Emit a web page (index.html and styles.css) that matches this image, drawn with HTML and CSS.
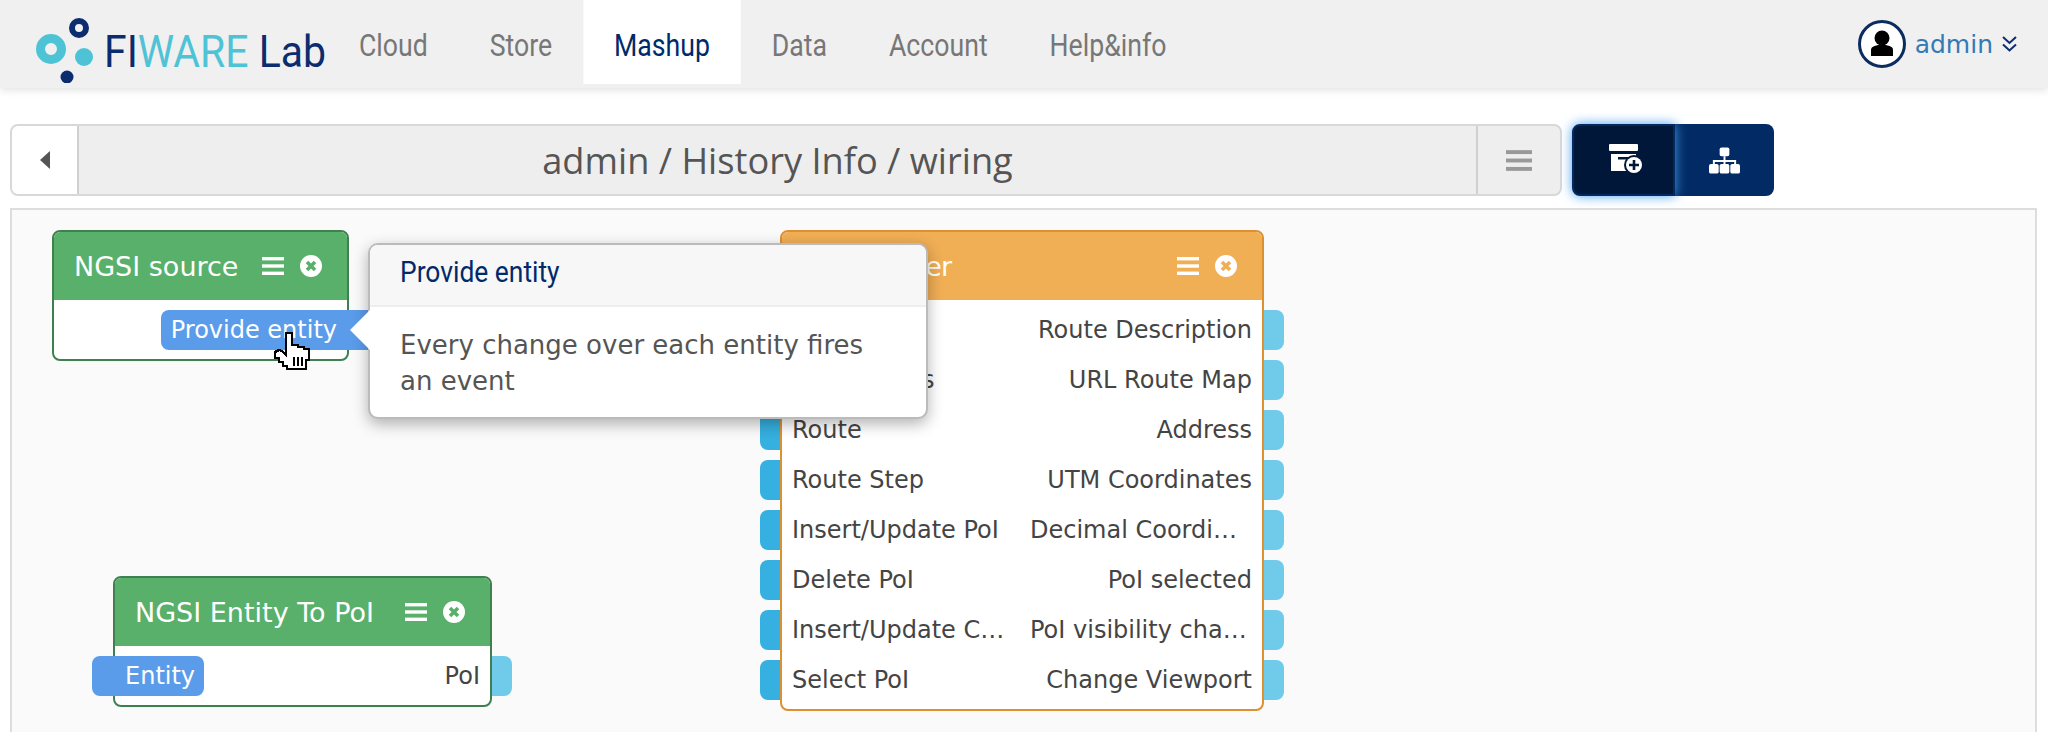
FILE: index.html
```html
<!DOCTYPE html>
<html lang="en">
<head>
  <meta charset="UTF-8" />
  <title>FIWARE Lab - Wiring</title>
  <link rel="stylesheet" href="styles.css">
</head>
<body>

  <svg class="defs" width="0" height="0">
    <symbol id="i-bars" viewBox="0 0 22 20" preserveAspectRatio="none">
      <rect x="0" y="1" width="22" height="3.4" />
      <rect x="0" y="8.3" width="22" height="3.4" />
      <rect x="0" y="15.6" width="22" height="3.4" />
    </symbol>
    <symbol id="i-close" viewBox="0 0 22 22">
      <circle cx="11" cy="11" r="11" fill="#fff" />
      <path d="M7 7l8 8M15 7l-8 8" stroke="currentColor" stroke-width="3.6" fill="none" />
    </symbol>
  </svg>

  <div id="topbar">
    <div id="logo">
      <svg class="logo-mark" width="72" height="70" viewBox="0 0 72 70">
        <circle cx="19" cy="36" r="10.5" fill="none" stroke="#4fc3d6" stroke-width="9" />
        <circle cx="52" cy="44" r="9" fill="#4fc3d6" />
        <circle cx="47" cy="15" r="7" fill="none" stroke="#0b2c6e" stroke-width="6" />
        <circle cx="35" cy="64" r="6.5" fill="#0b2c6e" />
      </svg>
      <span class="logo-text"><b>FI</b><i>WARE</i> <b>Lab</b></span>
    </div>
    <div id="nav">
      <a class="tab" href="#">Cloud</a>
      <a class="tab" href="#">Store</a>
      <a class="tab active" href="#">Mashup</a>
      <a class="tab" href="#">Data</a>
      <a class="tab" href="#">Account</a>
      <a class="tab" href="#">Help&amp;info</a>
    </div>
    <div id="user">
      <svg width="48" height="48" viewBox="0 0 48 48">
        <circle cx="24" cy="24" r="22.5" fill="#fff" stroke="#0b2c5e" stroke-width="3" />
        <circle cx="24" cy="18" r="7.5" fill="#000" />
        <path d="M13 36v-6c0-3 3-4 7-5h8c4 1 7 2 7 5v6z" fill="#000" />
      </svg>
      <span class="user-name">admin</span>
      <svg width="15" height="16" viewBox="0 0 15 16">
        <path d="M1 1l6.5 6 6.5-6M1 8.500l6.500 6 6.500-6" fill="none" stroke="#0b2c6e" stroke-width="2" />
      </svg>
    </div>
  </div>

  <div id="toolbar">
    <div class="path-bar">
      <div class="back">
        <svg width="10" height="18" viewBox="0 0 10 18"><path d="M10 0v18L0 9z" fill="#555" /></svg>
      </div>
      <div class="path-title">admin / History Info / wiring</div>
      <div class="path-menu">
        <svg class="bars-grey" width="26" height="23"><use href="#i-bars" /></svg>
      </div>
    </div>
    <div class="btn-group">
      <div class="blue-btn on">
        <svg width="38" height="32" viewBox="0 0 38 32">
          <rect x="4" y="0" width="29" height="7" rx="1" fill="#fff" />
          <rect x="6" y="10" width="25" height="17" fill="#fff" />
          <rect x="13" y="13" width="11" height="2.500" fill="#00173a" />
          <circle cx="29" cy="21" r="10" fill="#00173a" />
          <circle cx="29" cy="21" r="8" fill="#fff" />
          <path d="M29 16v10M24 21h10" stroke="#00173a" stroke-width="2.600" />
        </svg>
      </div>
      <div class="blue-btn">
        <svg width="31" height="27" viewBox="0 0 32 27" fill="#fff">
          <rect x="11" y="0" width="10" height="9" rx="2" />
          <path d="M15 9h2v4h11v6h-2v-4H17v4h-2v-4H6v4H4v-6h11z" />
          <rect x="0" y="17" width="10" height="10" rx="2" />
          <rect x="11" y="17" width="10" height="10" rx="2" />
          <rect x="22" y="17" width="10" height="10" rx="2" />
        </svg>
      </div>
    </div>
  </div>

  <div id="canvas">

    <div class="node green node-source">
      <div class="node-head">
        <span class="node-title">NGSI source</span>
        <svg class="ico-bars" width="22" height="20"><use href="#i-bars" /></svg>
        <svg class="ico-close" width="22" height="22"><use href="#i-close" /></svg>
      </div>
      <div class="node-body">
        <div class="ep-row end">
          <span class="pill pill-out">Provide entity</span>
        </div>
      </div>
    </div>

    <div class="node green node-topoi">
      <div class="node-head">
        <span class="node-title">NGSI Entity To PoI</span>
        <svg class="ico-bars" width="22" height="20"><use href="#i-bars" /></svg>
        <svg class="ico-close" width="22" height="22"><use href="#i-close" /></svg>
      </div>
      <div class="node-body">
        <div class="ep-row">
          <span class="pill pill-in">Entity</span>
          <div class="ep out"><span class="label">PoI</span></div>
        </div>
      </div>
    </div>

    <div class="node orange node-map">
      <div class="node-head">
        <span class="node-title">Map Viewer</span>
        <svg class="ico-bars" width="22" height="20"><use href="#i-bars" /></svg>
        <svg class="ico-close" width="22" height="22"><use href="#i-close" /></svg>
      </div>
      <div class="node-body">
        <div class="ep-row"><div class="ep in"><span class="label">Layer Info</span></div><div class="ep out"><span class="label">Route Description</span></div></div>
        <div class="ep-row"><div class="ep in"><span class="label">Set Address</span></div><div class="ep out"><span class="label">URL Route Map</span></div></div>
        <div class="ep-row"><div class="ep in"><span class="label">Route</span></div><div class="ep out"><span class="label">Address</span></div></div>
        <div class="ep-row"><div class="ep in"><span class="label">Route Step</span></div><div class="ep out"><span class="label">UTM Coordinates</span></div></div>
        <div class="ep-row"><div class="ep in"><span class="label">Insert/Update PoI</span></div><div class="ep out"><span class="label">Decimal Coordinates</span></div></div>
        <div class="ep-row"><div class="ep in"><span class="label">Delete PoI</span></div><div class="ep out"><span class="label">PoI selected</span></div></div>
        <div class="ep-row"><div class="ep in"><span class="label">Insert/Update Centered PoI</span></div><div class="ep out"><span class="label">PoI visibility changed</span></div></div>
        <div class="ep-row"><div class="ep in"><span class="label">Select PoI</span></div><div class="ep out"><span class="label">Change Viewport</span></div></div>
      </div>
    </div>

    <div id="popover">
      <div class="pop-title"><span>Provide entity</span></div>
      <div class="pop-body">Every change over each entity fires an event</div>
    </div>

    <svg id="cursor" width="40" height="42" viewBox="0 0 40 42" shape-rendering="crispEdges">
      <path d="M14 3h6v12h6v2h6v2h5v11h-3v9H15v-3h-4v-4H7v-4H3v-6l4-2 3 1 4 4z" fill="#fff" stroke="#000" stroke-width="2.500" />
      <path d="M22 27v9M26 27v9M30 27v9" stroke="#000" stroke-width="2" />
    </svg>
  </div>

</body>
</html>
```

FILE: styles.css
```css
* { box-sizing: border-box; }
html, body {
  margin: 0; padding: 0; height: 100%;
  overflow: hidden;
  font-family: "DejaVu Sans", sans-serif;
  background: #fff;
}
body {
  display: flex;
  flex-direction: column;
}
.defs { position: absolute; }

/* top bar */
#topbar {
  height: 88px;
  flex: none;
  background: #f0f0f0;
  box-shadow: 0 2px 8px rgba(0,0,0,.12);
  display: flex;
  align-items: flex-start;
  padding-left: 32px;
  font-family: "Roboto", sans-serif;
}
#logo {
  display: flex;
  align-items: center;
  height: 88px;
  width: 296px;
  flex: none;
}
.logo-mark { flex: none; margin-top: 8px; }
.logo-text {
  display: inline-block;
  margin: 14px 0 0 0;
  font-size: 45px;
  white-space: nowrap;
  transform: scaleX(.91);
  transform-origin: left;
}
.logo-text b { font-weight: normal; color: #0b2c6e; }
.logo-text i { font-style: normal; color: #4fc3d6; }
/* the site's narrow face is not available, so the whole nav is squeezed */
#nav {
  display: flex;
  transform: scaleX(.86);
  transform-origin: left;
}
.tab {
  height: 84px;
  padding: 6px 36px 0;
  display: flex;
  align-items: center;
  font-size: 31px;
  color: #777;
  text-decoration: none;
}
.tab.active {
  background: #fff;
  color: #002a6a;
}
#user {
  margin-left: auto;
  margin-right: 31px;
  height: 88px;
  display: flex;
  align-items: center;
  gap: 9px;
  font-family: "DejaVu Sans", sans-serif;
}
.user-name { font-size: 25px; color: #337ab7; }

/* toolbar */
#toolbar {
  flex: none;
  display: flex;
  gap: 10px;
  margin: 36px 0 0 10px;
  height: 72px;
}
.path-bar {
  width: 1552px;
  display: flex;
  background: #eee;
  border: 2px solid #d8d8d8;
  border-radius: 8px;
}
.back {
  width: 67px;
  background: #fff;
  border-right: 2px solid #d0d0d0;
  border-radius: 6px 0 0 6px;
  display: flex;
  align-items: center;
  justify-content: center;
}
.path-title {
  flex: 1;
  display: flex;
  align-items: center;
  justify-content: center;
  font-family: "Open Sans", sans-serif;
  font-size: 36.2px;
  color: #555;
}
.path-menu {
  width: 84px;
  border-left: 2px solid #d0d0d0;
  display: flex;
  align-items: center;
  justify-content: center;
}
.bars-grey { fill: #999; }
.btn-group { display: flex; width: 202px; }
.blue-btn {
  flex: 1;
  background: #022b66;
  display: flex;
  align-items: center;
  justify-content: center;
  border-radius: 0 8px 8px 0;
}
.blue-btn.on {
  background: #00173a;
  border: 2px solid #012a62;
  border-radius: 8px 0 0 8px;
  box-shadow: 0 0 12px #4aa0f0;
  position: relative;
}

/* wiring canvas */
#canvas {
  position: relative;
  flex: 1;
  margin: 12px 11px 0 10px;
  background: #fafafa;
  border: 2px solid #ddd;
  border-bottom: none;
}
.node {
  position: absolute;
  border: 2px solid;
  border-radius: 8px;
  background: #fff;
}
.green { border-color: #3f8050; color: #58b06a; }
.orange { border-color: #dd9030; color: #f0ae55; }
.node-source { left: 40px; top: 20px; width: 297px; }
.node-topoi { left: 101px; top: 366px; width: 379px; }
.node-map { left: 768px; top: 20px; width: 484px; }
.node-map .node-title { letter-spacing: -.8px; }
.node-head {
  height: 68px;
  background: currentColor;
  border-radius: 6px 6px 0 0;
  display: flex;
  align-items: center;
  padding: 0 25px 0 20px;
}
.node-title {
  color: #fff;
  font-size: 27px;
  white-space: nowrap;
  margin-right: auto;
}
.ico-bars { fill: #fff; flex: none; margin-right: 16px; }
.ico-close { flex: none; }
.node-body {
  padding: 10px 0 9px;
  display: flex;
  flex-direction: column;
  gap: 10px;
}
.ep-row {
  display: grid;
  grid-template-columns: 1fr 1fr;
  height: 40px;
  font-size: 24px;
  color: #444;
}
.ep-row.end { display: flex; justify-content: flex-end; }
.ep {
  position: relative;
  min-width: 0;
  display: flex;
  align-items: center;
}
.ep.in { padding: 0 11px 0 10px; }
.ep.out { padding: 0 10px 0 8px; justify-content: flex-end; }
.ep::after {
  content: "";
  position: absolute;
  top: 0;
  width: 20px;
  height: 40px;
}
.ep.in::after { left: -22px; background: #35b0e0; border-radius: 8px 0 0 8px; }
.ep.out::after { right: -22px; background: #6fcbe9; border-radius: 0 8px 8px 0; }
.label {
  white-space: nowrap;
  overflow: hidden;
  text-overflow: ellipsis;
}
.pill {
  position: relative;
  display: flex;
  align-items: center;
  height: 40px;
  background: #5a9bea;
  color: #fff;
  border-radius: 8px 0 0 8px;
}
.pill-out { margin-right: -22px; padding: 0 32px 0 10px; }
.pill-in {
  margin-left: -23px;
  width: 112px;
  padding-left: 33px;
  border-radius: 8px;
}

/* popover over the wiring */
#popover {
  position: absolute;
  left: 356px;
  top: 33px;
  width: 560px;
  height: 176px;
  background: #fff;
  border: 2px solid #bbb;
  border-radius: 10px;
  box-shadow: 0 5px 15px rgba(0,0,0,.3);
  z-index: 5;
}
#popover::before {
  content: "";
  position: absolute;
  left: -20px;
  top: 65px;
  border-style: solid;
  border-width: 20px 20px 20px 0;
  border-color: transparent #fff transparent transparent;
}
.pop-title {
  height: 62px;
  padding: 0 0 6px 30px;
  display: flex;
  align-items: center;
  background: #f7f7f7;
  border-bottom: 2px solid #eee;
  border-radius: 8px 8px 0 0;
  font-family: "Roboto", sans-serif;
  font-size: 29px;
  color: #002a6a;
}
.pop-title span {
  transform: scaleX(.91);
  transform-origin: left;
}
.pop-body {
  padding: 20px 30px 0;
  font-size: 26px;
  line-height: 36px;
  color: #555;
}
#cursor {
  position: absolute;
  left: 260px;
  top: 120px;
  z-index: 6;
}
```
